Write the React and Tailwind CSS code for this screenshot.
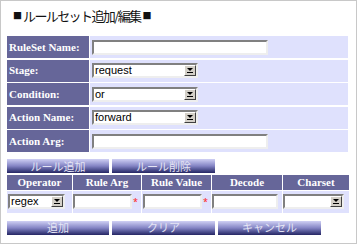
const serif = { fontFamily: '"Liberation Serif", "Times New Roman", serif' };

function TextBox({ w }) {
  return (
    <div
      className={`h-[15px] bg-white border-2 border-t-[#808080] border-l-[#808080] border-b-[#eeeeee] border-r-[#eeeeee] ${w}`}
    />
  );
}

function Select({ w, value }) {
  return (
    <div
      className={`h-[15px] flex items-stretch bg-white border-2 border-t-[#808080] border-l-[#808080] border-b-[#eeeeee] border-r-[#eeeeee] ${w}`}
    >
      <span className="flex-1 pl-[1px] text-[11px] leading-[11px] text-black font-['Liberation_Sans',Arial,sans-serif]">
        {value}
      </span>
      <span className="w-[12px] flex flex-col items-center justify-center bg-[#d4d0c8] border border-t-[#ffffff] border-l-[#ffffff] border-b-[#404040] border-r-[#404040]">
        <svg width="6" height="5" viewBox="0 0 6 5">
          <path d="M0 0h6L3 3z" fill="#000" />
          <rect x="0" y="4" width="6" height="1" fill="#000" />
        </svg>
      </span>
    </div>
  );
}

function NavButton({ children, w = 'w-[102px]' }) {
  return (
    <div
      className={`h-[14px] ${w} flex items-center justify-center bg-linear-to-b from-[#d0d0f4] via-[#8484c4] to-[#262664] text-[11px] leading-none text-[#e4e4f4] font-['Noto_Sans_CJK_JP',sans-serif]`}
    >
      {children}
    </div>
  );
}

const rows = [
  { label: 'RuleSet Name:', field: <TextBox w="w-[176px]" /> },
  { label: 'Stage:', field: <Select w="w-[106px]" value="request" /> },
  { label: 'Condition:', field: <Select w="w-[106px]" value="or" /> },
  { label: 'Action Name:', field: <Select w="w-[106px]" value="forward" /> },
  { label: 'Action Arg:', field: <TextBox w="w-[176px]" /> },
];

const heads = ['Operator', 'Rule Arg', 'Rule Value', 'Decode', 'Charset'];

export default function App() {
  return (
    <div className="w-[357px] h-[244px] bg-white border border-[#c8c8c8] overflow-hidden">
      <h1 className="ml-[12px] mt-[6px] h-[16px] flex items-center text-[13px] leading-none tracking-[-1.6px] text-[#111] font-['Noto_Sans_CJK_JP',sans-serif]">
        <span className="text-[9px] tracking-normal mr-[1px]">■</span>
        ルールセット追加/編集
        <span className="text-[9px] tracking-normal ml-[2px]">■</span>
      </h1>

      <div className="ml-[6px] mt-[13px] w-[341px] flex flex-col gap-[1.5px]">
        {rows.map((r) => (
          <div key={r.label} className="h-[22px] flex gap-[1px]">
            <div
              className="w-[82px] bg-[#666699] text-white font-bold text-[11px] flex items-center pl-[2px]"
              style={serif}
            >
              {r.label}
            </div>
            <div className="flex-1 bg-[#dfe1fd] flex items-center pl-[2px]">{r.field}</div>
          </div>
        ))}
      </div>

      <div className="ml-[6px] mt-[7px] flex gap-[3px]">
        <NavButton>ルール追加</NavButton>
        <NavButton w="w-[103px]">ルール削除</NavButton>
      </div>

      <div className="ml-[6px] mt-[1.5px] w-[342px] grid grid-cols-[65px_68px_69px_70px_66px] gap-[1px]">
        {heads.map((h) => (
          <div
            key={h}
            className="h-[15px] bg-[#666699] text-white font-bold text-[11px] flex items-center justify-center"
            style={serif}
          >
            {h}
          </div>
        ))}
        <div className="h-[22px] bg-[#dfe1fd] flex items-center pl-[1px]">
          <Select w="w-[57px]" value="regex" />
        </div>
        <div className="h-[22px] bg-[#dfe1fd] flex items-center pl-[0px] gap-[1px]">
          <TextBox w="w-[59px]" />
          <span className="text-[#ff2020] text-[9px] leading-none">*</span>
        </div>
        <div className="h-[22px] bg-[#dfe1fd] flex items-center pl-[1px] gap-[1px]">
          <TextBox w="w-[59px]" />
          <span className="text-[#ff2020] text-[9px] leading-none">*</span>
        </div>
        <div className="h-[22px] bg-[#dfe1fd] flex items-center pl-[0px]">
          <TextBox w="w-[66px]" />
        </div>
        <div className="h-[22px] bg-[#dfe1fd] flex items-center pl-[0px]">
          <Select w="w-[61px]" value="" />
        </div>
      </div>

      <div className="ml-[6px] mt-[8px] flex gap-[3px]">
        <NavButton>追加</NavButton>
        <NavButton w="w-[103px]">クリア</NavButton>
        <NavButton w="w-[103px]">キャンセル</NavButton>
      </div>
    </div>
  );
}
